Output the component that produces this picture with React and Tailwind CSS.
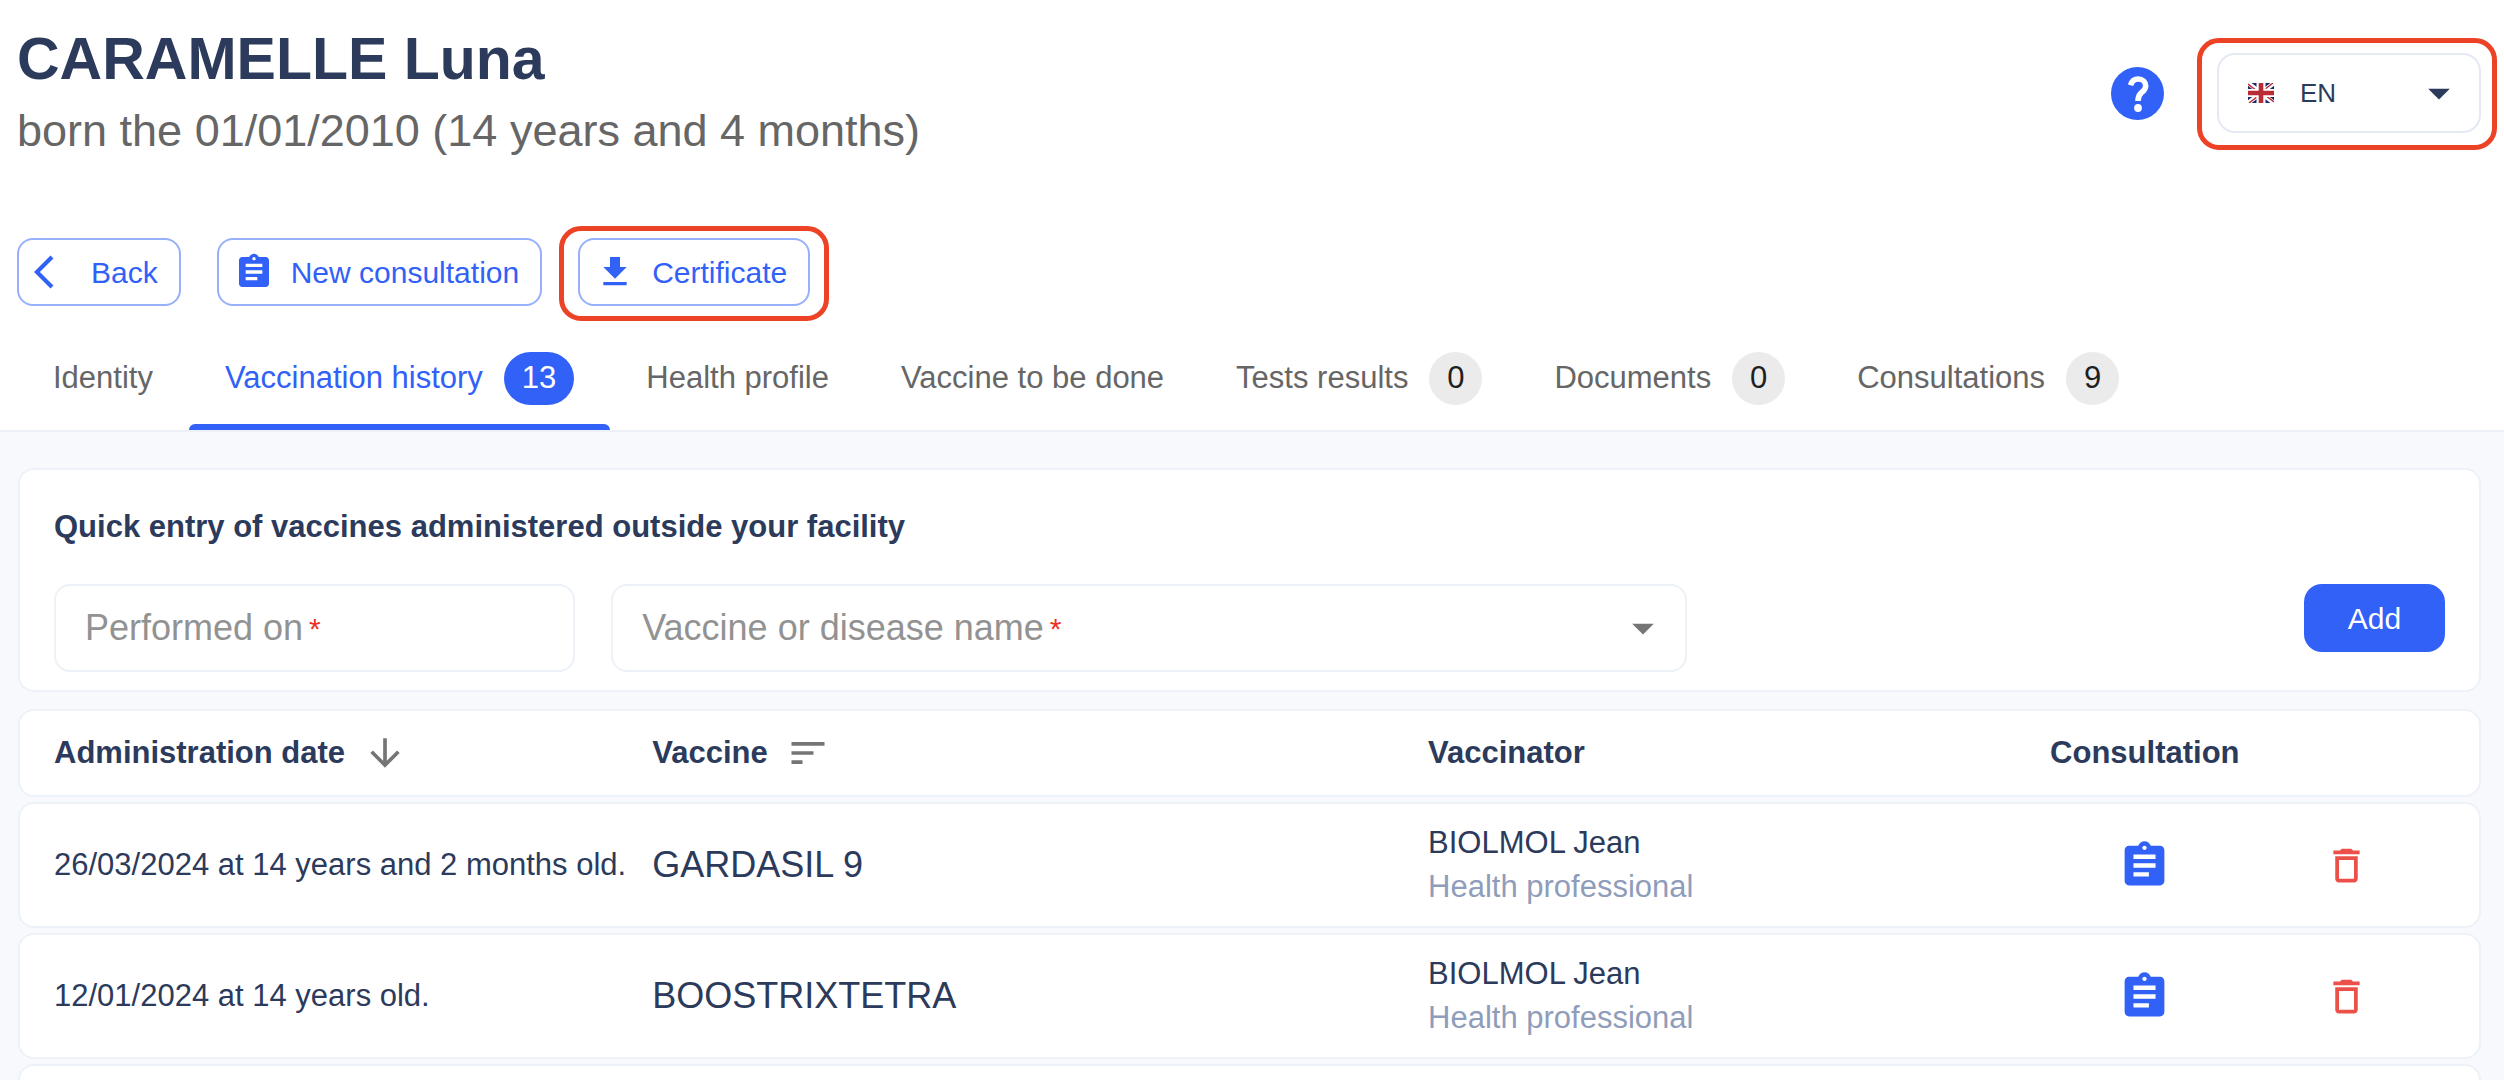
import { useState } from 'react';
import {
  MdArrowBackIos,
  MdArrowDownward,
  MdArrowDropDown,
  MdAssignment,
  MdDeleteOutline,
  MdSort,
} from 'react-icons/md';

const tabs = [
  { id: 'identity', label: 'Identity' },
  { id: 'history', label: 'Vaccination history', count: 13 },
  { id: 'health', label: 'Health profile' },
  { id: 'todo', label: 'Vaccine to be done' },
  { id: 'tests', label: 'Tests results', count: 0 },
  { id: 'documents', label: 'Documents', count: 0 },
  { id: 'consultations', label: 'Consultations', count: 9 },
];

const vaccinations = [
  {
    id: 1,
    date: '26/03/2024 at 14 years and 2 months old.',
    vaccine: 'GARDASIL 9',
    vaccinator: 'BIOLMOL Jean',
    role: 'Health professional',
  },
  {
    id: 2,
    date: '12/01/2024 at 14 years old.',
    vaccine: 'BOOSTRIXTETRA',
    vaccinator: 'BIOLMOL Jean',
    role: 'Health professional',
  },
];

const DownloadIcon = () => (
  <svg viewBox="0 0 24 24" className="size-10" fill="currentColor" aria-hidden="true">
    <path d="M19 9h-4V3H9v6H5l7 7 7-7zM5 18v2h14v-2H5z" />
  </svg>
);

const HelpIcon = () => (
  <svg viewBox="0 0 53 53" className="size-[53px]" aria-hidden="true">
    <circle cx="26.5" cy="26.5" r="26.5" fill="#3161f6" />
    <path
      d="M19.6 18.2C20.6 14.4 23.6 12 27.3 12c4.2 0 7.4 2.9 7.4 6.9 0 3.4-2.3 5.1-4.5 7-2 1.8-3.2 3.6-3.2 8"
      fill="none"
      stroke="#fff"
      strokeWidth="5.6"
    />
    <circle cx="27" cy="41" r="3.9" fill="#fff" />
  </svg>
);

const UkFlag = () => (
  <svg viewBox="0 0 26 20" className="w-[26px] h-5" aria-hidden="true">
    <rect width="26" height="20" fill="#1b2a6b" />
    <path d="M0 0l26 20M26 0L0 20" stroke="#fff" strokeWidth="4.4" />
    <path d="M0 1l13 10M26 19L13 9M25 0L12 10M1 20l13-10" stroke="#bf2a35" strokeWidth="1.4" />
    <path d="M13 0v20" stroke="#fff" strokeWidth="9" />
    <path d="M0 10h26" stroke="#fff" strokeWidth="8" />
    <path d="M13 0v20M0 10h26" stroke="#b92c36" strokeWidth="4.6" />
  </svg>
);

const OutlineButton = ({ icon, children }) => (
  <button
    type="button"
    className="flex h-[68px] items-center gap-[17px] rounded-2xl border-2 border-[#98b0fb] pl-[15px] pr-[21px] text-[30px] text-[#3161f6]"
  >
    {icon}
    {children}
  </button>
);

const LanguageSelect = () => (
  <div className="relative w-[264px]">
    <div className="pointer-events-none absolute -top-[15px] -right-4 -bottom-[17px] -left-5 rounded-[22px] border-[5px] border-[#ec4327]" />
    <select
      aria-label="Language"
      className="h-20 w-full appearance-none rounded-[18px] border-2 border-[#e4e9f4] bg-white pl-[81px] text-[26px]"
    >
      <option>EN</option>
    </select>
    <span className="pointer-events-none absolute inset-y-0 left-[31px] flex items-center">
      <UkFlag />
    </span>
    <span className="pointer-events-none absolute inset-y-0 right-4 flex items-center">
      <MdArrowDropDown className="size-[52px]" />
    </span>
  </div>
);

const FieldLabel = ({ htmlFor, children }) => (
  <label
    htmlFor={htmlFor}
    className="pointer-events-none absolute inset-y-0 left-[31px] flex items-center text-[36px] text-[#929292]"
  >
    {children}
    <span className="ml-1.5 text-[30px] text-[#ee3124]">*</span>
  </label>
);

const QuickEntry = () => (
  <section className="rounded-2xl border-2 border-[#edf1f8] bg-white px-[34px] pt-9 pb-[18px]">
    <h2 className="text-[31px] leading-[42px] font-bold">
      Quick entry of vaccines administered outside your facility
    </h2>
    <form className="mt-9 flex items-start gap-9">
      <div className="relative w-[21.8%]">
        <input
          id="performed-on"
          type="text"
          className="block h-[88px] w-full rounded-2xl border-2 border-[#edf1f8] bg-white px-[29px] text-[36px]"
        />
        <FieldLabel htmlFor="performed-on">Performed on</FieldLabel>
      </div>
      <div className="relative w-[45%]">
        <select
          id="vaccine-name"
          className="block h-[88px] w-full appearance-none rounded-2xl border-2 border-[#edf1f8] bg-white px-[29px] text-[36px]"
        >
          <option value="" />
        </select>
        <FieldLabel htmlFor="vaccine-name">Vaccine or disease name</FieldLabel>
        <span className="pointer-events-none absolute inset-y-0 right-[18px] flex items-center text-[#757575]">
          <MdArrowDropDown className="size-[52px]" />
        </span>
      </div>
      <button
        type="button"
        className="ml-auto h-[68px] w-[141px] rounded-[18px] bg-[#3161f6] text-[30px] text-white"
      >
        Add
      </button>
    </form>
  </section>
);

const cell = 'border-y-2 border-[#edf1f8] bg-white p-0';
const firstCell = 'border-y-2 border-l-2 border-[#edf1f8] bg-white rounded-l-2xl p-0 pl-[34px]';
const lastCell = 'border-y-2 border-r-2 border-[#edf1f8] bg-white rounded-r-2xl p-0 pr-10';

const VaccinationTable = () => (
  <table className="mt-3 w-full table-fixed border-separate border-spacing-x-0 border-spacing-y-[5px] text-left text-[31px]">
    <colgroup>
      <col className="w-[25.75%]" />
      <col className="w-[31.5%]" />
      <col className="w-[24.65%]" />
      <col className="w-[8.9%]" />
      <col className="w-[9.2%]" />
    </colgroup>
    <thead>
      <tr className="h-[88px]">
        <th className={firstCell}>
          <button type="button" className="flex items-center gap-[18px] font-bold">
            Administration date
            <MdArrowDownward className="size-11 text-[#757575]" />
          </button>
        </th>
        <th className={cell}>
          <button type="button" className="flex items-center gap-[18px] font-bold">
            Vaccine
            <MdSort className="size-11 text-[#757575]" />
          </button>
        </th>
        <th className={cell}>Vaccinator</th>
        <th className={`${cell} text-center`}>Consultation</th>
        <td className={lastCell} />
      </tr>
    </thead>
    <tbody>
      {vaccinations.map((row) => (
        <tr key={row.id} className="h-[126px]">
          <td className={`${firstCell} whitespace-nowrap`}>{row.date}</td>
          <td className={`${cell} text-[36px]`}>{row.vaccine}</td>
          <td className={`${cell} leading-[44px]`}>
            <p>{row.vaccinator}</p>
            <p className="text-[#8f9dba]">{row.role}</p>
          </td>
          <td className={cell}>
            <button type="button" aria-label="Open consultation" className="mx-auto block text-[#3161f6]">
              <MdAssignment className="size-[53px]" />
            </button>
          </td>
          <td className={lastCell}>
            <button type="button" aria-label="Delete" className="mx-auto block text-[#ec5149]">
              <MdDeleteOutline className="size-[45px]" />
            </button>
          </td>
        </tr>
      ))}
      <tr className="h-[126px]">
        <td className={firstCell} />
        <td className={cell} />
        <td className={cell} />
        <td className={cell} />
        <td className={lastCell} />
      </tr>
    </tbody>
  </table>
);

const App = () => {
  const [activeTab, setActiveTab] = useState('history');

  return (
    <div className="h-screen overflow-hidden bg-[#f7f9fd] font-['Liberation_Sans',Arial,sans-serif] text-[#2c3a5b]">
      <div className="border-b-2 border-[#edf0f7] bg-white pt-[23px] pr-[23px] pl-[17px]">
        <header className="flex items-start justify-between">
          <div>
            <h1 className="text-[59px] leading-[72px] font-bold">CARAMELLE Luna</h1>
            <p className="text-[45px] leading-[72px] text-[#666666]">
              born the 01/01/2010 (14 years and 4 months)
            </p>
          </div>
          <div className="mt-[30px] flex items-center gap-[53px]">
            <button type="button" aria-label="Help">
              <HelpIcon />
            </button>
            <LanguageSelect />
          </div>
        </header>

        <div className="mt-[71px] flex gap-9">
          <OutlineButton icon={<MdArrowBackIos className="size-10" />}>Back</OutlineButton>
          <OutlineButton icon={<MdAssignment className="size-10" />}>New consultation</OutlineButton>
          <div className="relative">
            <div className="pointer-events-none absolute -top-3 -right-[19px] -bottom-[15px] -left-[19px] rounded-[22px] border-[5px] border-[#ec4327]" />
            <OutlineButton icon={<DownloadIcon />}>Certificate</OutlineButton>
          </div>
        </div>

        <nav className="mt-5 flex text-[31px]">
          {tabs.map((tab) => {
            const active = tab.id === activeTab;
            return (
              <button
                key={tab.id}
                type="button"
                onClick={() => setActiveTab(tab.id)}
                className={`relative flex h-[104px] items-center gap-[21px] px-9 whitespace-nowrap ${active ? 'text-[#3161f6]' : 'text-[#666666]'}`}
              >
                {tab.label}
                {tab.count !== undefined && (
                  <span
                    className={`flex h-[53px] min-w-[53px] items-center justify-center rounded-full text-[31px] ${active ? 'bg-[#3161f6] px-[18px] text-white' : 'bg-[#ebebeb] text-[#1f1f1f]'}`}
                  >
                    {tab.count}
                  </span>
                )}
                {active && <span className="absolute inset-x-0 bottom-0 h-1.5 rounded-t-md bg-[#3161f6]" />}
              </button>
            );
          })}
        </nav>
      </div>

      <main className="pt-9 pr-[23px] pl-[18px]">
        <QuickEntry />
        <VaccinationTable />
      </main>
    </div>
  );
};

export default App;
